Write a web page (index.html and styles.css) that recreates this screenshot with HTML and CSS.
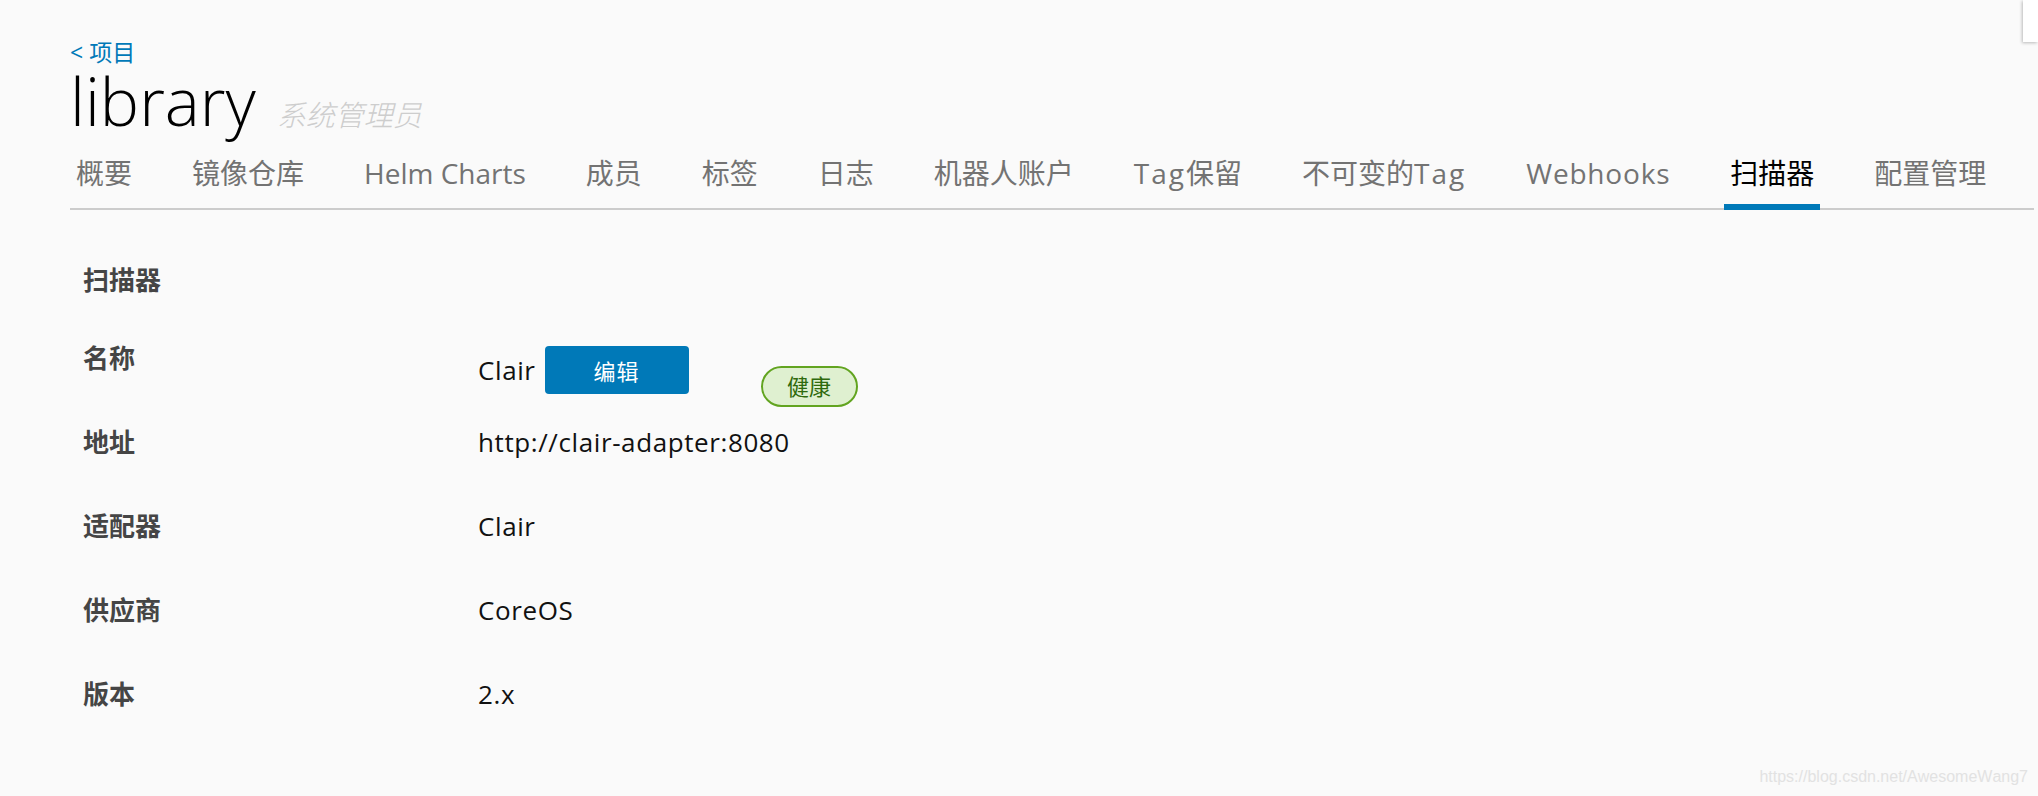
FILE: index.html
```html
<!DOCTYPE html>
<html lang="zh-CN">
<head>
    <meta charset="UTF-8">
    <meta name="viewport" content="width=device-width, initial-scale=1.0">
    <title>library - 扫描器</title>
    <link rel="stylesheet" href="styles.css">
</head>
<body>
    <div class="corner-panel"></div>
    <div class="page">
        <!-- Header -->
        <a class="back-link" href="#">&lt; 项目</a>
        <div class="title-row">
            <h1 class="project-name">library</h1>
            <span class="role">系统管理员</span>
        </div>

        <!-- Tabs -->
        <nav class="tabs">
            <a class="tab" href="#">概要</a>
            <a class="tab" href="#">镜像仓库</a>
            <a class="tab" href="#">Helm Charts</a>
            <a class="tab" href="#">成员</a>
            <a class="tab" href="#">标签</a>
            <a class="tab" href="#">日志</a>
            <a class="tab" href="#">机器人账户</a>
            <a class="tab" href="#"><span class="tag-word">Tag</span>保留</a>
            <a class="tab" href="#">不可变的<span class="tag-word">Tag</span></a>
            <a class="tab" href="#"><span class="en">Webhooks</span></a>
            <a class="tab active" href="#">扫描器</a>
            <a class="tab" href="#">配置管理</a>
        </nav>

        <!-- Scanner info -->
        <section class="scanner">
            <h3 class="scanner-title">扫描器</h3>
            <div class="info-row">
                <div class="info-label">名称</div>
                <div class="info-value name-value">
                    <span class="name-text">Clair</span>
                    <button class="btn-edit">编辑</button>
                    <span class="badge-healthy">健康</span>
                </div>
            </div>
            <div class="info-row">
                <div class="info-label">地址</div>
                <div class="info-value">http://clair-adapter:8080</div>
            </div>
            <div class="info-row">
                <div class="info-label">适配器</div>
                <div class="info-value">Clair</div>
            </div>
            <div class="info-row">
                <div class="info-label">供应商</div>
                <div class="info-value">CoreOS</div>
            </div>
            <div class="info-row">
                <div class="info-label">版本</div>
                <div class="info-value">2.x</div>
            </div>
        </section>
    </div>
    <div class="watermark">https://blog.csdn.net/AwesomeWang7</div>
</body>
</html>
```

FILE: styles.css
```css
body {
    margin: 0;
    padding: 0;
    background: #fafafa;
    font-family: "Open Sans", "Noto Sans CJK SC", sans-serif;
    font-kerning: none;
    color: #000;
    overflow: hidden;
}
.page {
    padding: 38px 4px 0 70px;
}
.back-link {
    display: inline-block;
    font-size: 23px;
    line-height: 28px;
    color: #0079b8;
    text-decoration: none;
}
.title-row {
    display: flex;
    align-items: baseline;
    height: 64px;
    margin-top: 2px;
}
.project-name {
    margin: 0;
    font-size: 66px;
    font-weight: 300;
    line-height: 64px;
    color: #000;
}
.role {
    margin-left: 21px;
    font-size: 29px;
    font-style: italic;
    font-weight: 300;
    color: #cdcdcd;
}
.tabs {
    display: flex;
    gap: 48px;
    margin-top: 23px;
    border-bottom: 2px solid #cccccc;
}
.tab {
    padding: 0 6px;
    height: 53px;
    font-size: 28px;
    line-height: 36px;
    color: #737373;
    text-decoration: none;
    white-space: nowrap;
}
.tab .en {
    letter-spacing: 0.8px;
}
.tab .tag-word {
    letter-spacing: 2px;
}
.tab.active {
    color: #000;
    height: 55px;
    margin-bottom: -2px;
    box-shadow: inset 0 -6px 0 #0079b8;
}
.scanner {
    padding: 52px 0 0 13px;
}
.scanner-title {
    margin: 0 0 42px;
    font-size: 26px;
    line-height: 36px;
    font-weight: 700;
    color: #454545;
}
.info-row {
    display: flex;
    align-items: flex-start;
    height: 84px;
}
.info-label {
    width: 395px;
    flex: none;
    font-size: 26px;
    line-height: 36px;
    font-weight: 700;
    color: #454545;
}
.info-value {
    font-size: 26px;
    line-height: 36px;
    letter-spacing: 0.6px;
    color: #111;
}
.name-value {
    display: flex;
    align-items: flex-start;
    margin-top: 6px;
}
.name-text {
    line-height: 48px;
}
.btn-edit {
    margin-left: 9px;
    width: 144px;
    height: 48px;
    border: none;
    border-radius: 4px;
    background: #0079b8;
    color: #fff;
    font-family: "Open Sans", "Noto Sans CJK SC", sans-serif;
    font-size: 22px;
    letter-spacing: 1px;
}
.badge-healthy {
    margin: 20px 0 0 72px;
    box-sizing: border-box;
    width: 97px;
    height: 41px;
    border: 2px solid #62a420;
    border-radius: 21px;
    background: #dff0d0;
    color: #2f6a0d;
    font-size: 22px;
    line-height: 37px;
    letter-spacing: 0;
    text-align: center;
}
.corner-panel {
    position: absolute;
    top: 0;
    right: 0;
    width: 15px;
    height: 42px;
    background: #fff;
    box-shadow: -1px 1px 3px rgba(0, 0, 0, 0.25);
}
.watermark {
    position: absolute;
    right: 10px;
    bottom: 10px;
    font-family: "Liberation Sans", Arial, sans-serif;
    font-size: 16px;
    color: #e2e2e2;
}
```
